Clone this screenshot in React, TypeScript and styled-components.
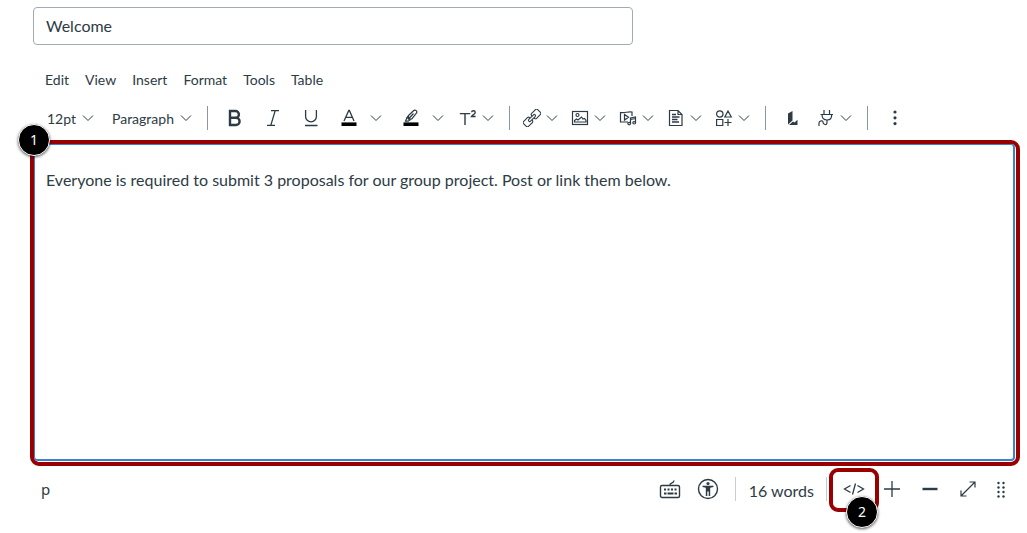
import React from "react";
import styled, { createGlobalStyle } from "styled-components";

const INK = "#2d3b45";
const RED = "#990000";

const GlobalStyle = createGlobalStyle`
  * { box-sizing: border-box; }
  body {
    margin: 0;
    background: #fff;
    color: ${INK};
    font-family: Lato, "Liberation Sans", sans-serif;
  }
  button, input, select, textarea { font: inherit; color: inherit; }
`;

const Page = styled.main`
  display: flex;
  flex-direction: column;
  padding: 7px 7px 28px 30px;
`;

const TitleInput = styled.input`
  width: 600px;
  max-width: 100%;
  height: 38px;
  margin-left: 3px;
  padding: 0 12px 2px;
  border: 1px solid #a2abb3;
  border-radius: 4px;
  background: #fff;
  font-size: 16px;
  outline: none;
`;

const MenuBar = styled.nav`
  display: flex;
  gap: 16px;
  margin-top: 25px;
  padding-left: 15px;
`;

const MenuButton = styled.button`
  height: 20px;
  padding: 0;
  border: 0;
  background: none;
  font-size: 14px;
  line-height: 20px;
`;

const Toolbar = styled.div`
  display: flex;
  align-items: center;
  flex-wrap: wrap;
  margin-top: 12px;
  padding-left: 11px;
`;

const SelectBox = styled.label<{ $width: number }>`
  display: grid;
  align-items: center;
  width: ${(p) => p.$width}px;
  margin-right: ${(p) => (p.$width < 80 ? 4 : 0)}px;
  > * { grid-area: 1 / 1; }
  > svg { justify-self: end; margin-right: 6px; pointer-events: none; }
`;

const Select = styled.select`
  appearance: none;
  width: 100%;
  height: 32px;
  padding: 0 24px 0 6px;
  border: 0;
  background: none;
  font-size: 14px;
  outline: none;
`;

const ToolButton = styled.button<{ $width?: number }>`
  display: flex;
  align-items: center;
  justify-content: center;
  flex: none;
  width: ${(p) => p.$width ?? 38}px;
  height: 32px;
  padding: 0;
  border: 0;
  background: none;
`;

const SplitArrow = styled(ToolButton)`
  width: 24px;
  justify-content: flex-start;
`;

const DropButton = styled(ToolButton)`
  width: 48px;
  gap: 3px;
  padding-right: 1px;
`;

const Divider = styled.span`
  flex: none;
  width: 1px;
  height: 24px;
  margin: 0 8px 0 7px;
  background: #8b969e;
`;

const Frame = styled.section`
  position: relative;
  display: flex;
  margin-top: 6px;
  padding: 0 1px 1px 0;
  border: 4px solid ${RED};
  border-radius: 9px;
`;

const Editor = styled.textarea`
  display: block;
  flex: 1;
  min-width: 0;
  height: 317px;
  padding: 24px 11px;
  border: solid #3f7fcb;
  border-width: 1px 2px 2px 1px;
  border-radius: 4px;
  background: #fff;
  font-size: 16px;
  line-height: 22px;
  resize: none;
  outline: none;
`;

const Badge = styled.span<{ $left: number; $top: number }>`
  position: absolute;
  z-index: 2;
  left: ${(p) => p.$left}px;
  top: ${(p) => p.$top}px;
  display: flex;
  align-items: center;
  justify-content: center;
  width: 32px;
  height: 32px;
  border: 1px solid #fff;
  border-radius: 50%;
  background: #000;
  box-shadow: 0 1px 3px rgba(0, 0, 0, 0.65);
  color: #fff;
  font: 14px/20px "Noto Sans", sans-serif;
`;

const StatusBar = styled.footer`
  display: flex;
  align-items: center;
  height: 32px;
  margin-top: 7px;
  padding: 0 5px 0 11px;
`;

const ElementPath = styled.span`
  margin-right: auto;
  font: 15px/20px "Noto Sans", sans-serif;
`;

const StatusDivider = styled(Divider)`
  margin: 0 8px;
  background: #c7cdd1;
`;

const WordCount = styled.span`
  padding: 4px 4px 0 5px;
  font-size: 16px;
  line-height: 20px;
  white-space: nowrap;
`;

const Marked = styled.div`
  position: relative;
  display: flex;
`;

const Highlight = styled.span`
  position: absolute;
  inset: -5px -6px -7px;
  border: 4px solid ${RED};
  border-radius: 9px;
  pointer-events: none;
`;

const Svg = styled.svg`
  display: block;
  flex: none;
  fill: none;
  stroke: ${INK};
  stroke-width: 1.2;
`;

type IconProps = { size?: number; children: React.ReactNode };
const Icon = ({ size = 18, children }: IconProps) => (
  <Svg width={size} height={size} viewBox={`0 0 ${size} ${size}`} aria-hidden="true">
    {children}
  </Svg>
);

const Chevron = () => (
  <Icon size={16}>
    <path d="M3 5.5l5 5 5-5" strokeWidth="1" />
  </Icon>
);

const BoldIcon = () => (
  <Icon>
    <path d="M4 2h5.5a3.4 3.4 0 0 1 0 6.8H4zM4 8.8h6a3.6 3.6 0 0 1 0 7.2H4zM4 1v16" strokeWidth="2.4" />
  </Icon>
);
const ItalicIcon = () => (
  <Icon>
    <path d="M7 1.6h8M3 16.4h8M11.2 1.6L6.800 16.4" strokeWidth="1.300" />
  </Icon>
);
const UnderlineIcon = () => (
  <Icon>
    <path d="M3.6 1v6.5a5.4 5.4 0 0 0 10.8 0V1M3 16.5h12.5" strokeWidth="1.300" />
  </Icon>
);
const TextColorIcon = () => (
  <Icon>
    <path d="M4 12L8.800 1.400h.6L14 12M6 8.400h6.200" strokeWidth="1.300" />
    <path d="M1.500 15.200h15" stroke="#000" strokeWidth="3.600" />
  </Icon>
);
const HighlightIcon = () => (
  <Icon>
    <path d="M6.500 6.500l5-4.800a1.900 1.900 0 0 1 2.700 2.700L9.800 9.800l-3.300.2zM6.500 6.500L5 8.500 7.800 11l2-1.200M5 8.500l-1.500 3.700h2.700L7.800 11M6.500 10l5-5.500" strokeWidth="1.200" />
    <path d="M1.500 15.200h15" stroke="#000" strokeWidth="3.600" />
  </Icon>
);
const SuperIcon = () => (
  <Icon>
    <path d="M.8 4.600h10.400M6 4.600V16" strokeWidth="1.400" />
    <path d="M12.600 3.300c.2-2 3.600-2 3.600.1 0 1.400-2.200 2.200-3.600 4.100h4" strokeWidth="1.400" />
  </Icon>
);
const LinkIcon = () => (
  <Icon>
    <g transform="rotate(-45 9 9)" strokeWidth="1.100">
      <path d="M7.500 7.500V7a1.500 1.500 0 0 0-1.500-1.500H.5A1.500 1.500 0 0 0-1 7v4a1.500 1.500 0 0 0 1.500 1.500H6A1.500 1.500 0 0 0 7.500 11v-.5" />
      <path d="M10.500 7.500V7a1.500 1.500 0 0 1 1.500-1.500h5.500A1.500 1.500 0 0 1 19 7v4a1.500 1.500 0 0 1-1.500 1.500H12a1.500 1.500 0 0 1-1.500-1.500v-.5" />
      <rect x="4.500" y="7.800" width="9" height="2.400" rx="1.200" />
    </g>
  </Icon>
);
const ImageIcon = () => (
  <Icon>
    <rect x="1.500" y="2.500" width="15" height="13" />
    <circle cx="6.500" cy="6" r="1.500" />
    <path d="M3.500 13v-1.500l2-1.500 1.500 1 3.500-3 1.500 2 1.500-.5 1.500 2V13z" />
  </Icon>
);
const MediaIcon = () => (
  <Icon>
    <path d="M9 13H1.500V3.500c4 .8 8-1.300 11.500-.5v4M5.500 5.500v5.500l4-2.700z" />
    <path d="M11.500 14.500V9l5-1v5.500M11.500 10.500l5-1" />
    <ellipse cx="10.200" cy="14.600" rx="1.400" ry="1.200" />
    <ellipse cx="15.200" cy="13.800" rx="1.400" ry="1.200" />
  </Icon>
);
const DocIcon = () => (
  <Icon>
    <path d="M2.500 1.500h8.500l4 4v11H2.500zM11 1.500v4h4" />
    <path d="M5 5.500h4M5 8h7.500M5 10.500h5.500M5 13h7" strokeWidth="1.300" />
  </Icon>
);
const ShapesIcon = () => (
  <Icon>
    <circle cx="4.800" cy="5" r="3.200" />
    <path d="M13 2l3.300 6H9.800zM1.600 10.500h6.200v6H1.600zM13 10v7M9.500 13.500h7" />
  </Icon>
);
const AppLogo = () => (
  <Icon>
    <path d="M4 4.500L8.500 2v9.500L4 15.500z" fill={INK} stroke="none" />
    <path d="M5 16L9 12.500l1.500 1 3-2.800V16z" fill={INK} stroke="none" />
  </Icon>
);
const PlugIcon = () => (
  <Icon>
    <path d="M7 1v4M12.500 1v4M3.500 5.500h12.500M5 5.500c0 4 1.500 5.500 5 5.500s4.700-1.500 4.700-5.500" />
    <path d="M10 11v2.500c0 3.500-4 2-4-.2 0-2.300-4-1.800-4 .7V17" />
  </Icon>
);
const MoreIcon = () => (
  <Icon>
    <g fill={INK} stroke="none">
      <circle cx="9" cy="3" r="1.600" />
      <circle cx="9" cy="8.800" r="1.600" />
      <circle cx="9" cy="14.600" r="1.600" />
    </g>
  </Icon>
);
const KeyboardIcon = () => (
  <Icon size={22}>
    <rect x="1.500" y="7.500" width="19" height="12" rx="1.500" strokeWidth="1.400" />
    <path d="M11 7c0-2.500 3.500-1 4-4.500" strokeWidth="1.400" />
    <path d="M5 11.500h13" strokeWidth="2" strokeDasharray="2 1.500" />
    <path d="M5 15.500h2.500M8.500 15.500h6M15.500 15.500H18" strokeWidth="2" />
  </Icon>
);
const AccessIcon = () => (
  <Icon size={22}>
    <circle cx="11" cy="11" r="9.500" strokeWidth="1.400" />
    <g fill={INK} stroke="none">
      <circle cx="11" cy="5.500" r="1.600" />
      <path d="M5.500 7.700h11v1.200l-3.300.8V18h-1.500v-4.500h-1.400V18H8.800V9.700l-3.300-.8z" />
    </g>
  </Icon>
);
const CodeIcon = () => (
  <Icon size={22}>
    <path d="M7.500 7.500L1.500 11l6 3.500M14.500 7.500l6 3.500-6 3.500M12.500 5.500l-3 11" strokeWidth="1.300" />
  </Icon>
);
const PlusIcon = () => (
  <Icon>
    <path d="M9 1v16M1 9h16" strokeWidth="1.300" />
  </Icon>
);
const MinusIcon = () => (
  <Icon>
    <path d="M1.500 9h15" strokeWidth="2.400" />
  </Icon>
);
const ExpandIcon = () => (
  <Icon>
    <path d="M2 16L16 2M10.500 2H16v5.500M2 10.500V16h5.500" />
  </Icon>
);
const GripIcon = () => (
  <Icon>
    <g fill={INK} stroke="none">
      {[3, 7.500, 12, 16.500].map((y) => (
        <React.Fragment key={y}>
          <circle cx="6.500" cy={y} r="1.200" />
          <circle cx="11.500" cy={y} r="1.200" />
        </React.Fragment>
      ))}
    </g>
  </Icon>
);

const menus = ["Edit", "View", "Insert", "Format", "Tools", "Table"];

const formatTools = [
  { label: "Bold", icon: <BoldIcon /> },
  { label: "Italic", icon: <ItalicIcon /> },
  { label: "Underline", icon: <UnderlineIcon /> },
];

const colorTools = [
  { label: "Text color", icon: <TextColorIcon /> },
  { label: "Background color", icon: <HighlightIcon /> },
];

const insertTools = [
  { label: "Links", icon: <LinkIcon /> },
  { label: "Images", icon: <ImageIcon /> },
  { label: "Record or upload media", icon: <MediaIcon /> },
  { label: "Documents", icon: <DocIcon /> },
  { label: "Icon maker", icon: <ShapesIcon /> },
];

const Drop = ({ label, icon }: { label: string; icon: React.ReactNode }) => (
  <DropButton type="button" aria-label={label} aria-haspopup="menu">
    {icon}
    <Chevron />
  </DropButton>
);

export default function App() {
  return (
    <>
      <GlobalStyle />
      <Page>
        <TitleInput aria-label="Title" defaultValue="Welcome" />
        <MenuBar>
          {menus.map((m) => (
            <MenuButton key={m} type="button">{m}</MenuButton>
          ))}
        </MenuBar>
        <Toolbar role="toolbar">
          <SelectBox $width={61}>
            <Select aria-label="Font size">
              <option>12pt</option>
            </Select>
            <Chevron />
          </SelectBox>
          <SelectBox $width={94}>
            <Select aria-label="Block style">
              <option>Paragraph</option>
            </Select>
            <Chevron />
          </SelectBox>
          <Divider />
          {formatTools.map((t) => (
            <ToolButton key={t.label} type="button" aria-label={t.label}>{t.icon}</ToolButton>
          ))}
          {colorTools.map((t) => (
            <React.Fragment key={t.label}>
              <ToolButton type="button" aria-label={t.label}>{t.icon}</ToolButton>
              <SplitArrow type="button" aria-label={`${t.label} menu`}><Chevron /></SplitArrow>
            </React.Fragment>
          ))}
          <Drop label="Superscript and subscript" icon={<SuperIcon />} />
          <Divider />
          {insertTools.map((t) => (
            <Drop key={t.label} {...t} />
          ))}
          <Divider />
          <ToolButton type="button" aria-label="Lucid"><AppLogo /></ToolButton>
          <Drop label="Apps" icon={<PlugIcon />} />
          <Divider />
          <ToolButton type="button" aria-label="More"><MoreIcon /></ToolButton>
        </Toolbar>
        <Frame>
          <Editor
            aria-label="Message"
            spellCheck={false}
            defaultValue="Everyone is required to submit 3 proposals for our group project. Post or link them below."
          />
          <Badge $left={-16} $top={-20}>1</Badge>
        </Frame>
        <StatusBar>
          <ElementPath>p</ElementPath>
          <ToolButton type="button" aria-label="Keyboard shortcuts"><KeyboardIcon /></ToolButton>
          <ToolButton type="button" aria-label="Accessibility checker"><AccessIcon /></ToolButton>
          <StatusDivider />
          <WordCount>16 words</WordCount>
          <StatusDivider />
          <Marked>
            <ToolButton type="button" aria-label="HTML editor"><CodeIcon /></ToolButton>
            <Highlight />
            <Badge $left={11} $top={23}>2</Badge>
          </Marked>
          <ToolButton type="button" aria-label="Increase height"><PlusIcon /></ToolButton>
          <ToolButton type="button" aria-label="Decrease height"><MinusIcon /></ToolButton>
          <ToolButton type="button" aria-label="Fullscreen"><ExpandIcon /></ToolButton>
          <ToolButton type="button" aria-label="Resize" $width={28}><GripIcon /></ToolButton>
        </StatusBar>
      </Page>
    </>
  );
}
